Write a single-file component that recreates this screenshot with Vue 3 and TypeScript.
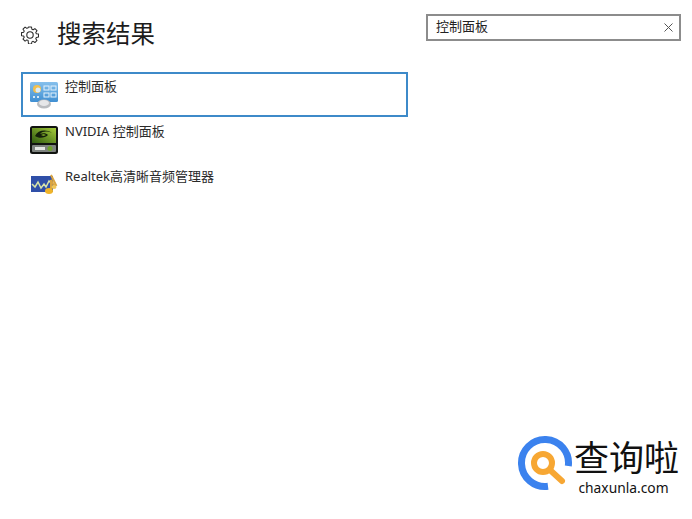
<script setup lang="ts">
import { ref } from 'vue';

interface ResultItem {
  name: string;
  icon: 'control' | 'nvidia' | 'realtek';
}

const query = ref('控制面板');

const results: ResultItem[] = [
  { name: '控制面板', icon: 'control' },
  { name: 'NVIDIA 控制面板', icon: 'nvidia' },
  { name: 'Realtek高清晰音频管理器', icon: 'realtek' }
];
</script>

<template>
  <div class="page">
    <div class="left">
      <div class="heading">
        <svg class="gear" width="18" height="18" viewBox="0 0 18 18" fill="none" stroke="#2b2b2b" stroke-width="1.100" stroke-linejoin="round">
          <path d="M7.400 1h3.200l.4 2.300 1.300.6 1.900-1.300 2.200 2.200-1.300 1.900.6 1.300 2.300.4v3.200l-2.300.4-.6 1.300 1.300 1.900-2.200 2.200-1.900-1.300-1.300.6-.4 2.300H7.400L7 15.200l-1.300-.6-1.900 1.300-2.200-2.200 1.300-1.900-.6-1.300L0 10.100V6.900l2.300-.4.6-1.300L1.600 3.300l2.200-2.200 1.900 1.300 1.300-.6z" transform="translate(.5 .1) scale(.945)" />
          <circle cx="9" cy="9" r="3.200" />
        </svg>
        <h1>搜索结果</h1>
      </div>

      <ul class="results">
        <li v-for="(item, i) in results" :key="item.name" class="row" :class="{ selected: i === 0 }">
          <svg v-if="item.icon === 'control'" class="icon" width="30" height="28" viewBox="0 0 30 28">
            <defs>
              <linearGradient id="panelBlue" x1="0" y1="0" x2="0" y2="1">
                <stop offset="0" stop-color="#86c0ec" />
                <stop offset="1" stop-color="#3f8fd2" />
              </linearGradient>
            </defs>
            <rect x="1" y="1" width="28" height="20" rx="1.500" fill="url(#panelBlue)" />
            <circle cx="8" cy="8" r="4" fill="#f3c04e" />
            <circle cx="9" cy="9" r="2.500" fill="#dcecf8" />
            <rect x="15" y="5" width="5" height="4" fill="none" stroke="#e4f1fb" />
            <rect x="22" y="5" width="5" height="4" fill="none" stroke="#e4f1fb" />
            <rect x="15" y="12" width="5" height="4" fill="none" stroke="#e4f1fb" />
            <rect x="22" y="12" width="5" height="4" fill="none" stroke="#e4f1fb" />
            <rect x="4" y="15" width="2" height="2" fill="#d5e8f6" />
            <rect x="8" y="15" width="2" height="2" fill="#d5e8f6" />
            <ellipse cx="15" cy="23" rx="7" ry="4.500" fill="#b9bcc0" />
            <ellipse cx="15" cy="22" rx="5" ry="3" fill="#e6e7e9" />
          </svg>

          <svg v-else-if="item.icon === 'nvidia'" class="icon" width="30" height="28" viewBox="0 0 30 28">
            <defs>
              <linearGradient id="nvGreen" x1="0" y1="1" x2="1" y2="0">
                <stop offset="0" stop-color="#2f5a10" />
                <stop offset="1" stop-color="#a5cc3a" />
              </linearGradient>
            </defs>
            <rect x="1" y="0" width="28" height="28" rx="2.500" fill="#111310" />
            <rect x="3" y="2" width="24" height="15" fill="url(#nvGreen)" />
            <path d="M6 10c3-6 11-7 17-3-5-2-9-2-12 1 3-1 6-1 8 1-3 3-9 4-13 1z" fill="#14200a" />
            <path d="M12 9c2-1 3-1 5 0-2 1-3 1-5 0z" fill="#8dbb2c" />
            <rect x="3" y="19" width="24" height="7" rx="1" fill="#7d827e" />
            <rect x="6" y="21" width="10" height="3" fill="#e4e6e3" />
            <circle cx="21" cy="22.500" r="2.500" fill="#6ea12a" />
          </svg>

          <svg v-else class="icon" width="30" height="28" viewBox="0 0 30 28">
            <rect x="2" y="5" width="22" height="16" fill="#2f4fa8" />
            <path d="M3 13l3 3 3-5 3 6 3-4 2 3 3-6 3 3" fill="none" stroke="#d8e4a8" stroke-width="1.500" />
            <path d="M22 4l5 10-2 1-3-6v9" fill="none" stroke="#d9a441" stroke-width="2" />
            <ellipse cx="20" cy="20" rx="4" ry="3" fill="#f0b429" />
            <ellipse cx="25" cy="16" rx="2.500" ry="2" fill="#f0c75a" />
          </svg>

          <span class="name">{{ item.name }}</span>
        </li>
      </ul>
    </div>

    <div class="search">
      <span class="query">{{ query }}</span>
      <svg width="9" height="9" viewBox="0 0 9 9" stroke="#555" stroke-width="1">
        <path d="M.5.5l8 8M8.500.5l-8 8" />
      </svg>
    </div>

    <div class="watermark">
      <svg class="logo" width="56" height="56" viewBox="0 0 56 56" fill="none">
        <path d="M31 51.300A23.500 23.500 0 1 1 51.300 31" stroke="#3b82ee" stroke-width="7" />
        <circle cx="26" cy="28" r="9" stroke="#f7a733" stroke-width="6" />
        <path d="M33 35l12 11" stroke="#f7a733" stroke-width="6" stroke-linecap="round" />
      </svg>
      <div class="brand">
        <div class="brand-cn">查询啦</div>
        <div class="brand-en">chaxunla.com</div>
      </div>
    </div>
  </div>
</template>

<style scoped>
.page {
  position: relative;
  width: 692px;
  height: 519px;
  background: #fff;
  overflow: hidden;
  display: flex;
  justify-content: space-between;
  align-items: flex-start;
  padding: 14px 11px 0 21px;
  box-sizing: border-box;
  font-family: "Noto Sans", "Noto Sans CJK SC", sans-serif;
  color: #222;
}

.left {
  width: 387px;
}

.heading {
  display: flex;
  align-items: center;
  gap: 18px;
  height: 38px;
}

.gear {
  flex: none;
  margin-top: 3px;
}

h1 {
  margin: 0;
  font-family: "Noto Sans CJK SC", sans-serif;
  font-size: 24.5px;
  font-weight: 400;
  line-height: 38px;
  color: #1c1c1c;
}

.results {
  list-style: none;
  margin: 20px 0 0;
  padding: 0;
}

.row {
  display: flex;
  gap: 6px;
  height: 45px;
  padding: 3px 0 0 6px;
  box-sizing: border-box;
  border: 2px solid transparent;
}

.row.selected {
  border-color: #3d8ac9;
}

.icon {
  flex: none;
  margin-top: 4px;
}

.name {
  font-size: 13px;
  line-height: 18px;
  color: #2a2a2a;
}

.search {
  width: 255px;
  height: 27px;
  box-sizing: border-box;
  border: 2px solid #8c8c8c;
  display: flex;
  align-items: center;
  justify-content: space-between;
  padding: 0 6px 0 8px;
}

.query {
  font-size: 13px;
  line-height: 18px;
  margin-bottom: 4px;
  color: #222;
}

.watermark {
  position: absolute;
  left: 517px;
  top: 434px;
  display: flex;
  gap: 1px;
}

.logo {
  margin-top: 1px;
}

.brand {
  display: flex;
  flex-direction: column;
  align-items: center;
}

.brand-cn {
  font-family: "Noto Sans CJK SC", sans-serif;
  font-size: 35px;
  line-height: 44px;
  color: #111;
}

.brand-en {
  font-size: 13.800px;
  line-height: 16px;
  margin: 2px 0 0 -6px;
  color: #111;
}
</style>
